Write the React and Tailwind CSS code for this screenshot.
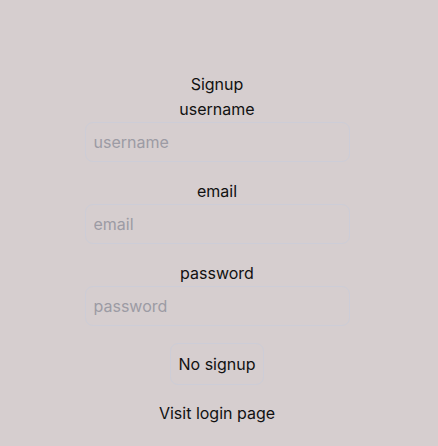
export default function App() {
  return (
    <div
      className="min-h-[446px] w-full bg-[#d6cecf] text-[#111] flex justify-center pr-1 pt-[72px]"
      style={{ fontFamily: "Inter, 'Noto Sans', sans-serif" }}
    >
      <div className="flex flex-col items-center w-[265px] text-base leading-6">
        <div>Signup</div>
        <div className="mt-px">username</div>
        <input
          className="mt-px w-full h-10 rounded-lg border border-[#cdcdd7] bg-transparent px-2 text-base placeholder:text-[#9c9ba4] outline-none"
          placeholder="username"
        />
        <div className="mt-[17px]">email</div>
        <input
          className="mt-px w-full h-10 rounded-lg border border-[#cdcdd7] bg-transparent px-2 text-base placeholder:text-[#9c9ba4] outline-none"
          placeholder="email"
        />
        <div className="mt-[17px]">password</div>
        <input
          className="mt-px w-full h-10 rounded-lg border border-[#cdcdd7] bg-transparent px-2 text-base placeholder:text-[#9c9ba4] outline-none"
          placeholder="password"
        />
        <button className="mt-[17px] h-[42px] w-[94px] rounded-lg border border-[#cdcdd7] bg-transparent text-base">
          No signup
        </button>
        <div className="mt-4">Visit login page</div>
      </div>
    </div>
  );
}
